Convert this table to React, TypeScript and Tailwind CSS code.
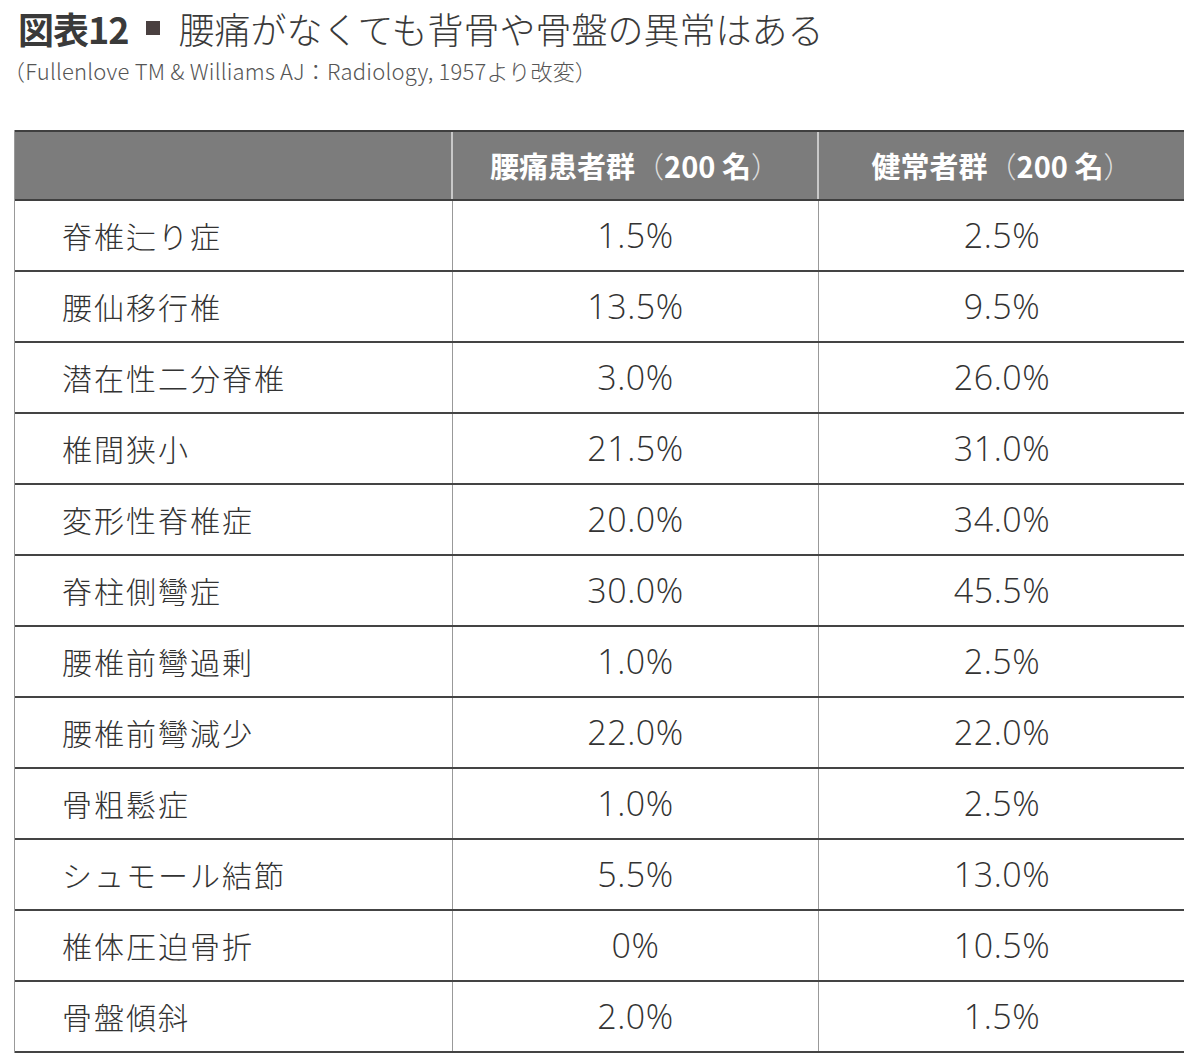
const rows: [string, string, string][] = [
  ['脊椎辷り症', '1.5%', '2.5%'],
  ['腰仙移行椎', '13.5%', '9.5%'],
  ['潜在性二分脊椎', '3.0%', '26.0%'],
  ['椎間狭小', '21.5%', '31.0%'],
  ['変形性脊椎症', '20.0%', '34.0%'],
  ['脊柱側彎症', '30.0%', '45.5%'],
  ['腰椎前彎過剰', '1.0%', '2.5%'],
  ['腰椎前彎減少', '22.0%', '22.0%'],
  ['骨粗鬆症', '1.0%', '2.5%'],
  ['シュモール結節', '5.5%', '13.0%'],
  ['椎体圧迫骨折', '0%', '10.5%'],
  ['骨盤傾斜', '2.0%', '1.5%'],
];

const jp = "font-['Noto_Sans_CJK_JP',sans-serif]";
const num = "font-['Open_Sans','Noto_Sans_CJK_JP',sans-serif]";

export default function App() {
  return (
    <div className="w-[1184px] h-[1064px] bg-white overflow-hidden text-[#333]">
      <div className="pl-[18px] pt-[6px]">
        <h1 className={`${jp} text-[36px] leading-[44px] text-[#3a3a3a] flex items-center`}>
          <span className="font-bold tracking-[-1px]">図表12</span>
          <span className="inline-block w-[14px] h-[14px] bg-[#4a4040] mx-[18px]" />
          <span className="font-light">腰痛がなくても背骨や骨盤の異常はある</span>
        </h1>
        <p className={`${jp} font-light text-[22px] leading-[28px] text-[#555] mt-[6px] -ml-[15px] tracking-[0.2px]`}>
          （Fullenlove TM &amp; Williams AJ：Radiology, 1957より改変）
        </p>
      </div>

      <div className="ml-[14px] mt-[46px] w-[1170px] border-l border-[#999]">
        <div className="grid grid-cols-[438px_366px_366px] h-[71px] bg-[#7c7c7c] border-t-2 border-b-2 border-[#3f3f3f]">
          <div className="border-r-2 border-[#c8c8c8]" />
          <div className={`${jp} flex items-center justify-center font-bold text-white text-[29px] border-r-2 border-[#c8c8c8]`}>
            腰痛患者群<span className="font-light text-[#ddd]">（</span>200 名<span className="font-light text-[#ddd]">）</span>
          </div>
          <div className={`${jp} flex items-center justify-center font-bold text-white text-[29px]`}>
            健常者群<span className="font-light text-[#ddd]">（</span>200 名<span className="font-light text-[#ddd]">）</span>
          </div>
        </div>
        {rows.map(([label, a, b]) => (
          <div key={label} className="grid grid-cols-[438px_366px_366px] h-[71px] border-b-2 border-[#444]">
            <div className={`${jp} font-light text-[30px] flex items-center pl-[47px] tracking-[2px] border-r border-[#999]`}>
              {label}
            </div>
            <div className={`${num} font-light text-[34px] flex items-center justify-center tracking-[0.5px] border-r border-[#999]`}>
              {a}
            </div>
            <div className={`${num} font-light text-[34px] flex items-center justify-center tracking-[0.5px]`}>
              {b}
            </div>
          </div>
        ))}
      </div>
    </div>
  );
}
